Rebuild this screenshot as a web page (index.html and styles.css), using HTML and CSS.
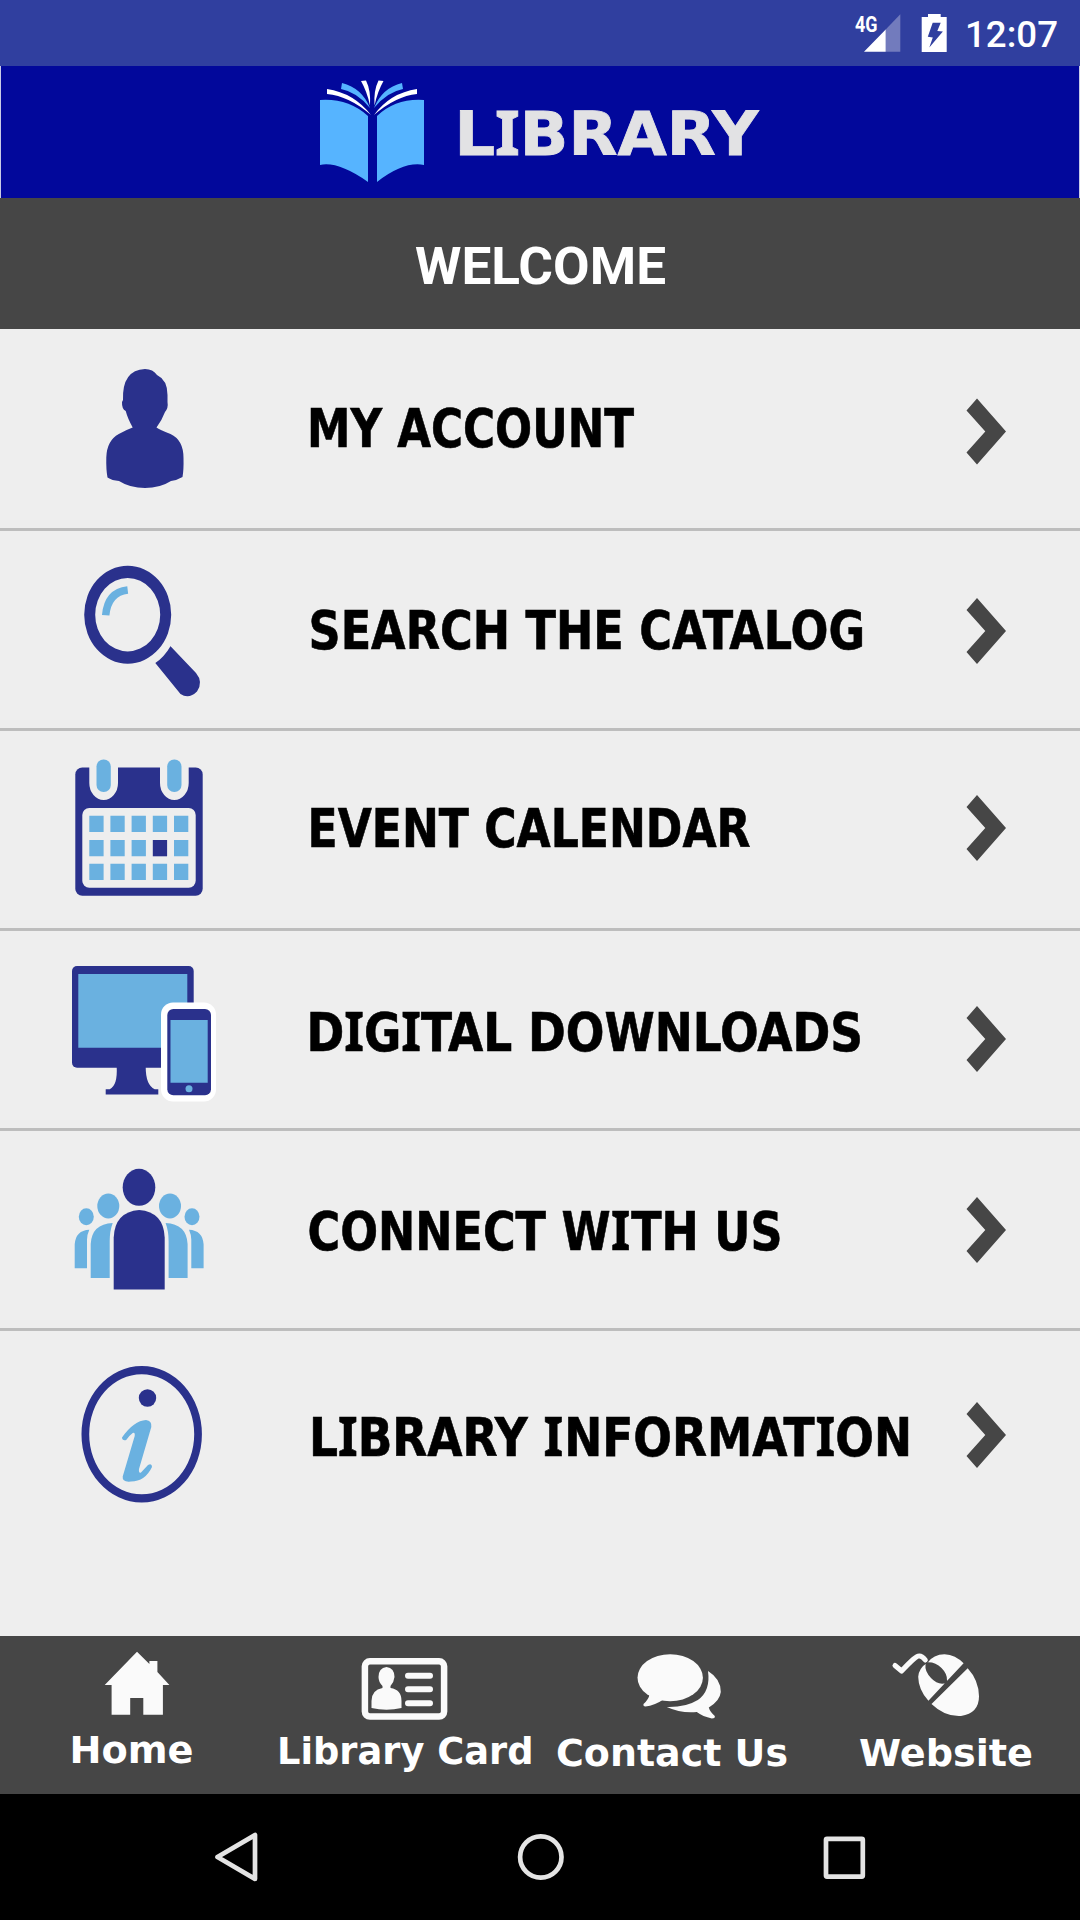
FILE: index.html
```html
<!DOCTYPE html>
<html lang="en">
<head>
<meta charset="utf-8">
<title>Library</title>
<link rel="stylesheet" href="styles.css">
</head>
<body>
<div class="screen">
  <div class="status-bar">
    <svg width="250" height="66" viewBox="830 0 250 66">
      <text class="network" x="855" y="31.5" textLength="22.5" lengthAdjust="spacingAndGlyphs">4G</text>
      <path fill="#727bbd" d="M885.7 29.5 900.3 14.3V51.7H885.7z"/>
      <path fill="#fff" d="M864 51.7 885.7 29.5V51.7zM928 14h12.7v3h6v35h-25V17h6.3z"/>
      <path fill="#303f9f" d="M932.7 22.7h8l-3.4 8.3 5.6.4-13.6 16 3.5-10-5-.6z"/>
      <text class="clock" x="965" y="46.7" textLength="93" lengthAdjust="spacingAndGlyphs">12:07</text>
    </svg>
  </div>

  <header class="brand">
    <svg width="1078" height="132" viewBox="1 66 1078 132">
      <g fill="#56b4ff">
        <path d="M320 100q28-2 48 16v66q-30-21-48-17zM424 100q-28-2-47 16v66q27-21 47-17z"/>
        <path d="M342 83q20 5 28 25-13-16-29-19zM402 83q-20 5-28 25 13-16 29-19z"/>
      </g>
      <path fill="#fff" d="M327 89q27 4 44 26-22-19-44-21zM417 89q-27 4-43 26 22-19 43-21zM361 81l5-.5q5 10 4 25-3-14-9-24.500zM383.500 81l-5-.5q-5 10-4 25 3-14 9-24.500z"/>
      <text class="brand-name" x="454.500" y="154.700" textLength="304" lengthAdjust="spacingAndGlyphs">L<tspan class="slab">I</tspan>BRARY</text>
    </svg>
  </header>

  <div class="title-bar">
    <svg width="1080" height="131" viewBox="0 198 1080 131">
      <text class="title" x="415" y="284" textLength="251" lengthAdjust="spacingAndGlyphs">WELCOME</text>
    </svg>
  </div>

  <main class="menu">
    <a class="row">
      <svg class="icon" viewBox="0 331 300 197">
        <path class="navy" d="M145 369q8 0 12 6 10.500 5 10.500 20v7q1 6-2.500 10-3 8-8.500 15.500 3 2 14 6.500 13 6 13 24 .3 12-1 19-5 3-11.500 4-11 7-26 7t-26-7q-7-.5-11.500-3.500-1.500-8-1.200-20 .5-17 12.500-23.500 7-4 13.900-6.500-5-9-7-16.500-4-2-3.700-9l1-2q-1-30 22-31z"/>
      </svg>
      <svg class="label" viewBox="300 331 640 197"><text x="307" y="447" textLength="327" lengthAdjust="spacingAndGlyphs">MY ACCOUNT</text></svg>
      <svg class="go" viewBox="940 331 140 197"><path d="M977 398.500 1006 431.500 977 464.500 966.500 452.500 985.300 431.500 966.500 410.500z"/></svg>
    </a>
    <a class="row">
      <svg class="icon" viewBox="0 531 300 197">
        <path class="navy" fill-rule="evenodd" d="M127.700 565.700a43.500 49 0 0 1 0 98a43.500 49 0 0 1 0-98zM127.700 578a32.500 36.700 0 0 0 0 73.400a32.500 36.700 0 0 0 0-73.400z"/>
        <path class="sky-line" d="M105.700 615.300q2-23 22-25.300"/>
        <path class="navy" d="M170.300 646 196 673q7.500 9 1 18.500-8 8-16.500 2.500l-25.200-31q9-6 15-16.500z"/>
      </svg>
      <svg class="label" viewBox="300 531 640 197"><text x="308.500" y="649" textLength="556.500" lengthAdjust="spacingAndGlyphs">SEARCH THE CATALOG</text></svg>
      <svg class="go" viewBox="940 531 140 197"><path transform="translate(0 199.500)" d="M977 398.500 1006 431.500 977 464.500 966.500 452.500 985.300 431.500 966.500 410.500z"/></svg>
    </a>
    <a class="row">
      <svg class="icon" viewBox="0 731 300 197">
        <rect class="navy" x="75.300" y="767.500" width="127.400" height="128.200" rx="7"/>
        <path class="paper" d="M89.300 760h28.700v23a14.350 17 0 0 1-28.700 0zM160 760h28.700v23a14.350 17 0 0 1-28.700 0z"/>
        <rect class="sky" x="96.500" y="759.500" width="14.300" height="32.500" rx="7"/>
        <rect class="sky" x="167.200" y="759.500" width="14.300" height="32.500" rx="7"/>
        <rect class="paper" x="82.300" y="808" width="113.400" height="79.700" rx="7"/>
        <path class="sky" d="M89.300 815.700h14.300v16.300h-14.300zM110.400 815.700h14.300v16.300h-14.300zM131.600 815.700h14.300v16.300h-14.300zM152.800 815.700h14.300v16.300h-14.300zM174 815.700h14.300v16.300h-14.300zM89.300 840h14.300v16.300h-14.300zM110.400 840h14.300v16.300h-14.300zM131.600 840h14.300v16.300h-14.300zM174 840h14.300v16.300h-14.300zM89.300 863.800h14.300v16.300h-14.300zM110.400 863.800h14.300v16.300h-14.300zM131.600 863.800h14.300v16.300h-14.300zM152.800 863.800h14.300v16.300h-14.300zM174 863.800h14.300v16.300h-14.300z"/>
        <path class="navy" d="M152.800 840h14.300v16.300h-14.300z"/>
      </svg>
      <svg class="label" viewBox="300 731 640 197"><text x="307.500" y="846.500" textLength="443" lengthAdjust="spacingAndGlyphs">EVENT CALENDAR</text></svg>
      <svg class="go" viewBox="940 731 140 197"><path transform="translate(0 396.500)" d="M977 398.500 1006 431.500 977 464.500 966.500 452.500 985.300 431.500 966.500 410.500z"/></svg>
    </a>
    <a class="row">
      <svg class="icon" viewBox="0 931 300 197">
        <rect class="navy" x="72" y="966" width="121.700" height="101.700" rx="5"/>
        <path class="sky" d="M78.300 974h109v73.700h-109z"/>
        <path class="navy" d="M116.700 1067h29q0 18 9 22.300h3.600v5.200h-52.600v-5.200h4q8-4 7-22.300z"/>
        <rect fill="#fff" x="161" y="1002.500" width="55" height="99" rx="12"/>
        <rect class="navy" x="167.300" y="1009" width="43.700" height="86.300" rx="6"/>
        <path class="sky" d="M170.500 1020h37.200v62.700h-37.200z"/>
        <circle class="sky" cx="189" cy="1088.700" r="3.500"/>
      </svg>
      <svg class="label" viewBox="300 931 640 197"><text x="306.500" y="1050.500" textLength="556.500" lengthAdjust="spacingAndGlyphs">D<tspan class="slab">I</tspan>G<tspan class="slab">I</tspan>TAL DOWNLOADS</text></svg>
      <svg class="go" viewBox="940 931 140 197"><path transform="translate(0 607.500)" d="M977 398.500 1006 431.500 977 464.500 966.500 452.500 985.300 431.500 966.500 410.500z"/></svg>
    </a>
    <a class="row">
      <svg class="icon" viewBox="0 1131 300 197">
        <ellipse class="navy" cx="139" cy="1187.300" rx="16.300" ry="18.500"/>
        <path class="navy" d="M113.700 1289.500v-52q1-25.500 25.500-27.500 24.500 2 25.500 27.500v52z"/>
        <g id="friends" class="sky">
          <ellipse cx="108.300" cy="1206" rx="11" ry="12.500"/>
          <ellipse cx="86.300" cy="1216.700" rx="7.500" ry="8.500"/>
          <path d="M90.700 1278v-34q1-20 22-21-3 8-3 18v37zM74.700 1268.300v-24q1-14 14.600-14.600-2.300 5-2.300 10v28.600z"/>
        </g>
        <use href="#friends" transform="translate(278.300 0) scale(-1 1)"/>
      </svg>
      <svg class="label" viewBox="300 1131 640 197"><text x="307.500" y="1249.500" textLength="475" lengthAdjust="spacingAndGlyphs">CONNECT W<tspan class="slab" dx=".5">I</tspan><tspan dx="1">TH US</tspan></text></svg>
      <svg class="go" viewBox="940 1131 140 197"><path transform="translate(0 798.500)" d="M977 398.500 1006 431.500 977 464.500 966.500 452.500 985.300 431.500 966.500 410.500z"/></svg>
    </a>
    <a class="row last">
      <svg class="icon" viewBox="0 1331 300 197">
        <path class="navy" fill-rule="evenodd" d="M141.700 1366a60.300 68.300 0 0 1 0 136.600a60.300 68.300 0 0 1 0-136.600zM141.700 1374.300a52.500 60 0 0 0 0 120a52.500 60 0 0 0 0-120z"/>
        <circle class="navy" cx="147.500" cy="1398" r="8.700"/>
        <path class="sky" d="M122 1437.500q12-17 24-17.500 6 .5 5.300 7l-12.300 42q-.5 4.500 2 3.500l7-7.500q4-2 4 2-7 14.500-21 14.500-9 1-8.300-5l12-40.500q.5-4-2-3-4 3-6.500 7-4 1-4.200-2.500z"/>
      </svg>
      <svg class="label" viewBox="300 1331 640 197"><text x="309" y="1455.500" textLength="603" lengthAdjust="spacingAndGlyphs">L<tspan class="slab">I</tspan>BRARY <tspan class="slab">I</tspan><tspan dx="1">NFORMAT</tspan><tspan class="slab" dx="1">I</tspan>ON</text></svg>
      <svg class="go" viewBox="940 1331 140 197"><path transform="translate(0 1003.500)" d="M977 398.500 1006 431.500 977 464.500 966.500 452.500 985.300 431.500 966.500 410.500z"/></svg>
    </a>
  </main>

  <nav class="tabs">
    <svg class="tab" width="240" height="158" viewBox="0 1636 240 158">
      <path class="glyph" d="M137 1651.700 149.400 1664v-3h8v11l12 13h-6.500v29.700h-19.600V1698h-13.100v16.700h-18.600V1685h-6.900z"/>
      <text x="69.500" y="1763" textLength="124" lengthAdjust="spacingAndGlyphs">Home</text>
    </svg>
    <svg class="tab" width="304" height="158" viewBox="240 1636 304 158">
      <rect x="364.900" y="1661.300" width="79.200" height="55.300" rx="5" fill="none" stroke="#fafafa" stroke-width="6.500"/>
      <path class="glyph" d="M386.500 1667q8 1 8 10-.5 5-4 9v2q11 1.500 11 13v7q-15 3.500-30 0v-7q0-11 11-13v-2q-4-4-4-9 0-9 8-10z"/>
      <path d="M408 1675.700h22M408 1689.300h22M408 1703.300h22" stroke="#fafafa" stroke-width="6" stroke-linecap="round"/>
      <text x="277" y="1764" textLength="256.500" lengthAdjust="spacingAndGlyphs">Library Card</text>
    </svg>
    <svg class="tab" width="266" height="158" viewBox="544 1636 266 158">
      <ellipse class="glyph" cx="670.200" cy="1677.700" rx="32.700" ry="23.500"/>
      <path class="glyph" d="M649.500 1694q-.5 5-6 10-.5 2.500 2 2.500 9-1 18-7zM708 1671q13 8 12.800 21-1 9-12 15.500 1 4 6 8.500.5 2.500-3 2.500-9-2-15-6.500-16 1.500-30-5 19 .5 31-7 13-9 10.200-29z"/>
      <text x="556" y="1765.500" textLength="232" lengthAdjust="spacingAndGlyphs">Contact Us</text>
    </svg>
    <svg class="tab" width="270" height="158" viewBox="810 1636 270 158">
      <path d="M895 1665.500 901.600 1671q15-16 17.200-15 3-.5 6.500 4" fill="none" stroke="#fafafa" stroke-width="5" stroke-linecap="round" stroke-linejoin="round"/>
      <path class="glyph" d="M928.400 1700.700q-10-11-10.200-24 .8-9 9.300-14 6-8.500 17-8.500 11 .6 19.100 9.100zM967.700 1668.300q11 12 11.300 28 0 17-18 19.700-16 1-29.500-12z"/>
      <path class="wheel" d="M926 1662.500q9-1 15.500 5.500 6 6 5.500 12.500l1 4-4-1q-7 1-13-5.500-6.500-7-5.500-13z"/>
      <text x="859" y="1765.500" textLength="174" lengthAdjust="spacingAndGlyphs">Website</text>
    </svg>
  </nav>

  <div class="system-nav">
    <svg width="1080" height="126" viewBox="0 1794 1080 126" fill="none" stroke="#e4e4e4" stroke-width="4.700" stroke-linejoin="round">
      <path d="M217.500 1857 255 1835v44z"/>
      <circle cx="540.800" cy="1857" r="20.700"/>
      <rect x="826" y="1838.800" width="36.800" height="37.800" rx="1"/>
    </svg>
  </div>
</div>
</body>
</html>
```

FILE: styles.css
```css
* {
  box-sizing: border-box;
}

body {
  margin: 0;
  background: #000;
}

svg {
  display: block;
}

.screen {
  width: 1080px;
  height: 1920px;
  display: flex;
  flex-direction: column;
}

.status-bar {
  height: 66px;
  background: #303f9f;
  display: flex;
  justify-content: flex-end;
}

.network,
.clock {
  font-family: Roboto, sans-serif;
  fill: #fff;
}

.network {
  font-size: 21.5px;
  font-weight: 700;
}

.clock {
  font-size: 36.5px;
  font-weight: 500;
}

.brand {
  height: 132px;
  background: #02089b;
  border: solid #c9cbe6;
  border-width: 0 1px;
}

.brand-name {
  font: 700 60.3px "DejaVu Sans", sans-serif;
  fill: #e2e2e4;
  stroke: #e2e2e4;
  stroke-width: 0.8px;
}

.slab {
  font-family: "Noto Sans", sans-serif;
}

.title-bar {
  height: 131px;
  background: #464646;
}

.title {
  font: 700 51.5px Roboto, sans-serif;
  fill: #fff;
}

.menu {
  flex: 1;
  padding-top: 2px;
  background: #eee;
}

.row {
  height: 200px;
  border-bottom: 3px double #b4b4b4;
  border-bottom-style: solid;
  border-bottom-color: #bdbdbd;
  display: flex;
}

.row.last {
  border-bottom-color: transparent;
}

.icon {
  width: 300px;
  height: 197px;
}

.label {
  width: 640px;
  height: 197px;
}

.label text {
  font: 700 54px "DejaVu Sans Condensed", "DejaVu Sans", sans-serif;
  fill: #000;
  stroke: #000;
  stroke-width: 0.6px;
}

.label .slab {
  font-family: "Noto Sans", sans-serif;
}

.go {
  width: 140px;
  height: 197px;
  fill: #464646;
}

.navy {
  fill: #2a318c;
}

.sky {
  fill: #6ab1e0;
}

.sky-line {
  fill: none;
  stroke: #6ab1e0;
  stroke-width: 7.5px;
}

.paper {
  fill: #eee;
}

.tabs {
  height: 158px;
  background: #464646;
  display: flex;
}

.tab text {
  font: 700 37.5px "DejaVu Sans", sans-serif;
  fill: #fff;
}

.glyph {
  fill: #fafafa;
}

.wheel {
  fill: #464646;
}

.system-nav {
  height: 126px;
  background: #000;
}
```
